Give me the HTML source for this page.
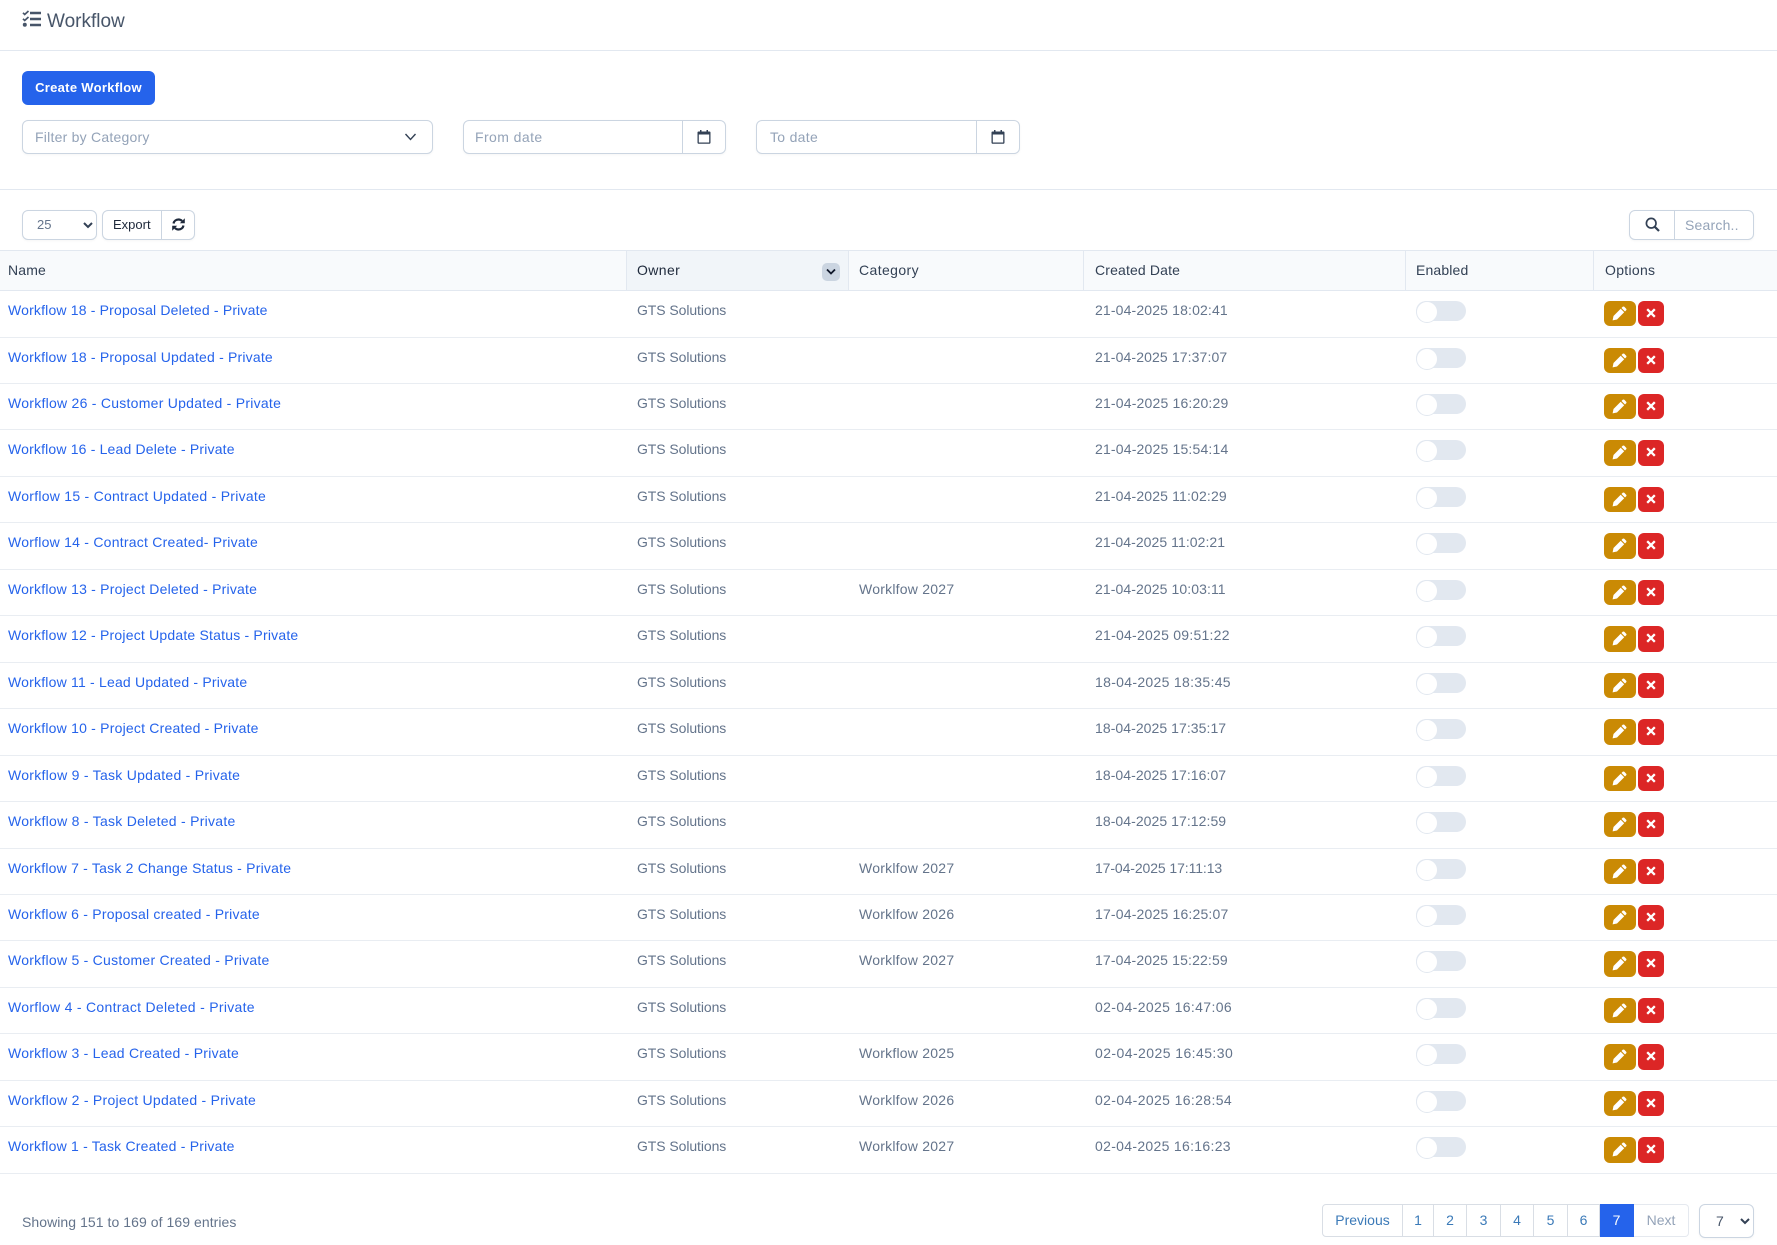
<!DOCTYPE html>
<html><head><meta charset="utf-8"><title>Workflow</title>
<style>
*{box-sizing:border-box}
html,body{margin:0;padding:0;background:#fff}
body{width:1777px;height:1245px;position:relative;overflow:hidden;font-family:"Liberation Sans",sans-serif;font-size:14px;color:#64748b}
.a{position:absolute;white-space:nowrap}
.box{position:absolute;border:1px solid #cbd5e1;border-radius:6px;background:#fff;box-shadow:0 1px 2px rgba(0,0,0,.04)}
.ph{color:#94a3b8;letter-spacing:.3px;line-height:20px}
.th{position:absolute;top:260px;line-height:20px;color:#334155;letter-spacing:.15px;white-space:nowrap}
.vl{position:absolute;top:250px;height:40px;width:1px;background:#e2e8f0}
#rows{position:absolute;left:0;top:291.1px;width:1777px}
.r{position:relative;height:46.46px;border-bottom:1px solid #e9edf2}
.r>*{position:absolute;white-space:nowrap}
.n,.o,.c,.d{top:9px;line-height:20px}
.n{left:8px;color:#2563eb;text-decoration:none}
.o{left:637px;letter-spacing:-.08px}
.c{left:859px;letter-spacing:.23px}
.d{left:1095px}
.t{left:1416px;top:10px;width:50px;height:20px;border-radius:10px;background:#e2e8f0}
.t:before{content:"";position:absolute;left:0;top:0;width:20px;height:20px;border-radius:50%;background:#fff;border:1px solid #e2e8f0}
.e{left:1604px;top:10px;width:32px;height:25.4px;border-radius:6px;background:#ca8a04}
.x{left:1638px;top:10px;width:26px;height:25.4px;border-radius:6px;background:#dc2626}
.e svg{position:absolute;left:8px;top:5px}
.x svg{position:absolute;left:8px;top:7px}
.p{position:absolute;top:1204px;height:33px;line-height:31px;text-align:center;color:#3b7ab8;border:1px solid #d9dee5;border-left:0;background:#fff}
</style></head>
<body>
<svg width="0" height="0" style="position:absolute"><defs>
<symbol id="pen" viewBox="0 0 15 15"><path fill="#fff" d="M10.700.8Q11.500.1 12.300.8L14.200 2.700Q14.900 3.500 14.200 4.300L13 5.500 9.500 2zM8.700 2.800 12.200 6.300 5 13.500.6 14.400 1.500 10z"/></symbol>
<symbol id="xx" viewBox="0 0 10 10"><path d="M1.200 1.200 8.800 8.800M8.800 1.200 1.200 8.800" stroke="#fff" stroke-width="2.300"/></symbol>
<symbol id="cal" viewBox="0 0 14 14"><path fill="#334155" d="M3 0h1.500v1.500h5V0H11v1.500h1.500c.6 0 1 .4 1 1v10c0 .8-.5 1.300-1.300 1.300H1.800C1 13.800.5 13.300.5 12.500v-10c0-.6.4-1 1-1H3zM1.800 4.500v8h10.400v-8z"/></symbol>
</defs></svg>

<!-- header -->
<svg class="a" style="left:22px;top:10px" width="20" height="17" viewBox="0 0 20 17"><g fill="none" stroke="#475569"><path stroke-width="1.700" d="M1 2.800 2.700 4.500 6.500 1M1 8.800 2.700 10.500 6.500 7"/><path stroke-width="2.400" d="M8 3h11M8 9h11M8 15h11"/></g><circle cx="2.800" cy="14.800" r="2" fill="#475569"/></svg>
<div class="a" style="left:47px;top:10px;font-size:19px;line-height:24px;color:#475569">Workflow</div>
<div class="a" style="left:0;top:50px;width:1777px;height:1px;background:#e2e8f0"></div>

<!-- create -->
<div class="a" style="left:22px;top:71px;width:133px;height:34px;background:#2563eb;border-radius:6px;color:#fff;font-weight:bold;font-size:13px;letter-spacing:.3px;line-height:34px;text-align:center">Create Workflow</div>

<!-- filters -->
<div class="box" style="left:22px;top:120px;width:411px;height:34px"></div>
<div class="a ph" style="left:35px;top:127px;letter-spacing:.23px">Filter by Category</div>
<svg class="a" style="left:404px;top:133px" width="13" height="8" viewBox="0 0 13 8"><path d="M1.500 1 6.500 6.500 11.500 1" fill="none" stroke="#334155" stroke-width="1.400"/></svg>

<div class="box" style="left:463px;top:120px;width:263px;height:34px"></div>
<div class="a" style="left:682px;top:120px;width:1px;height:34px;background:#cbd5e1"></div>
<div class="a ph" style="left:475px;top:127px;letter-spacing:.42px">From date</div>
<svg class="a" style="left:697px;top:130px" width="14" height="14"><use href="#cal"/></svg>

<div class="box" style="left:756px;top:120px;width:264px;height:34px"></div>
<div class="a" style="left:976px;top:120px;width:1px;height:34px;background:#cbd5e1"></div>
<div class="a ph" style="left:770px;top:127px">To date</div>
<svg class="a" style="left:991px;top:130px" width="14" height="14"><use href="#cal"/></svg>

<div class="a" style="left:0;top:189px;width:1777px;height:1px;background:#e2e8f0"></div>

<!-- toolbar -->
<div class="box" style="left:22px;top:210px;width:75px;height:30px"></div>
<div class="a" style="left:37px;top:215px;font-size:13px;line-height:20px;color:#64748b">25</div>
<svg class="a" style="left:83px;top:222px" width="10" height="7" viewBox="0 0 10 7"><path d="M1 1 5 5 9 1" fill="none" stroke="#334155" stroke-width="2"/></svg>
<div class="box" style="left:102px;top:210px;width:93px;height:30px"></div>
<div class="a" style="left:161px;top:210px;width:1px;height:30px;background:#cbd5e1"></div>
<div class="a" style="left:113px;top:215px;font-size:13px;line-height:20px;color:#1e293b">Export</div>
<svg class="a" style="left:172px;top:218px" width="13" height="13" viewBox="0 0 13 13"><g fill="none" stroke="#1e293b" stroke-width="2.200"><path d="M1.500 5.500C2 3 4 1.500 6.500 1.500c1.500 0 2.700.6 3.600 1.500"/><path d="M11.500 7.500C11 10 9 11.500 6.500 11.500c-1.500 0-2.700-.6-3.600-1.500"/></g><path fill="#1e293b" d="M12.800.2v5H7.800zM.2 12.800v-5H5.200z"/></svg>

<div class="box" style="left:1629px;top:210px;width:125px;height:30px"></div>
<div class="a" style="left:1674px;top:210px;width:1px;height:30px;background:#cbd5e1"></div>
<svg class="a" style="left:1645px;top:217px" width="15" height="15" viewBox="0 0 15 15"><circle cx="6.200" cy="6.200" r="4.800" fill="none" stroke="#334155" stroke-width="1.700"/><path d="M9.800 9.800 14 14" stroke="#334155" stroke-width="2.200"/></svg>
<div class="a ph" style="left:1685px;top:215px;letter-spacing:.2px">Search..</div>

<!-- table head -->
<div class="a" style="left:0;top:250px;width:1777px;height:41px;background:#f8fafc;border-top:1px solid #e2e8f0;border-bottom:1px solid #e2e8f0"></div>
<div class="a" style="left:626px;top:250px;width:223px;height:41px;background:#f1f5f9;border-top:1px solid #e2e8f0;border-bottom:1px solid #e2e8f0"></div>
<div class="vl" style="left:626px"></div><div class="vl" style="left:848px"></div><div class="vl" style="left:1083px"></div><div class="vl" style="left:1405px"></div><div class="vl" style="left:1593px"></div>
<div class="th" style="left:8px">Name</div>
<div class="th" style="left:637px;color:#1e293b;letter-spacing:.4px">Owner</div>
<div class="a" style="left:822px;top:263px;width:18px;height:18px;border-radius:5px;background:#cbd5e1"></div>
<svg class="a" style="left:826px;top:268px" width="10" height="8" viewBox="0 0 10 8"><path d="M1 1.500 5 5.500 9 1.500" fill="none" stroke="#0f172a" stroke-width="1.800"/></svg>
<div class="th" style="left:859px;letter-spacing:.4px">Category</div>
<div class="th" style="left:1095px">Created Date</div>
<div class="th" style="left:1416px">Enabled</div>
<div class="th" style="left:1605px;letter-spacing:.3px">Options</div>

<div id="rows">
<div class="r"><a class="n" style="letter-spacing:.175px">Workflow 18 - Proposal Deleted - Private</a><span class="o">GTS Solutions</span><span class="d" style="letter-spacing:.15px">21-04-2025 18:02:41</span><i class="t"></i><b class="e"><svg width="15" height="15"><use href="#pen"/></svg></b><b class="x"><svg width="10" height="10"><use href="#xx"/></svg></b></div>
<div class="r"><a class="n" style="letter-spacing:.19px">Workflow 18 - Proposal Updated - Private</a><span class="o">GTS Solutions</span><span class="d" style="letter-spacing:.12px">21-04-2025 17:37:07</span><i class="t"></i><b class="e"><svg width="15" height="15"><use href="#pen"/></svg></b><b class="x"><svg width="10" height="10"><use href="#xx"/></svg></b></div>
<div class="r"><a class="n" style="letter-spacing:.26px">Workflow 26 - Customer Updated - Private</a><span class="o">GTS Solutions</span><span class="d" style="letter-spacing:.18px">21-04-2025 16:20:29</span><i class="t"></i><b class="e"><svg width="15" height="15"><use href="#pen"/></svg></b><b class="x"><svg width="10" height="10"><use href="#xx"/></svg></b></div>
<div class="r"><a class="n" style="letter-spacing:.17px">Workflow 16 - Lead Delete - Private</a><span class="o">GTS Solutions</span><span class="d" style="letter-spacing:.18px">21-04-2025 15:54:14</span><i class="t"></i><b class="e"><svg width="15" height="15"><use href="#pen"/></svg></b><b class="x"><svg width="10" height="10"><use href="#xx"/></svg></b></div>
<div class="r"><a class="n" style="letter-spacing:.26px">Worflow 15 - Contract Updated - Private</a><span class="o">GTS Solutions</span><span class="d" style="letter-spacing:.15px">21-04-2025 11:02:29</span><i class="t"></i><b class="e"><svg width="15" height="15"><use href="#pen"/></svg></b><b class="x"><svg width="10" height="10"><use href="#xx"/></svg></b></div>
<div class="r"><a class="n" style="letter-spacing:.24px">Worflow 14 - Contract Created- Private</a><span class="o">GTS Solutions</span><span class="d" style="letter-spacing:.06px">21-04-2025 11:02:21</span><i class="t"></i><b class="e"><svg width="15" height="15"><use href="#pen"/></svg></b><b class="x"><svg width="10" height="10"><use href="#xx"/></svg></b></div>
<div class="r"><a class="n" style="letter-spacing:.21px">Workflow 13 - Project Deleted - Private</a><span class="o">GTS Solutions</span><span class="c">Worklfow 2027</span><span class="d" style="letter-spacing:.09px">21-04-2025 10:03:11</span><i class="t"></i><b class="e"><svg width="15" height="15"><use href="#pen"/></svg></b><b class="x"><svg width="10" height="10"><use href="#xx"/></svg></b></div>
<div class="r"><a class="n" style="letter-spacing:.2px">Workflow 12 - Project Update Status - Private</a><span class="o">GTS Solutions</span><span class="d" style="letter-spacing:.25px">21-04-2025 09:51:22</span><i class="t"></i><b class="e"><svg width="15" height="15"><use href="#pen"/></svg></b><b class="x"><svg width="10" height="10"><use href="#xx"/></svg></b></div>
<div class="r"><a class="n" style="letter-spacing:.2px">Workflow 11 - Lead Updated - Private</a><span class="o">GTS Solutions</span><span class="d" style="letter-spacing:.31px">18-04-2025 18:35:45</span><i class="t"></i><b class="e"><svg width="15" height="15"><use href="#pen"/></svg></b><b class="x"><svg width="10" height="10"><use href="#xx"/></svg></b></div>
<div class="r"><a class="n" style="letter-spacing:.21px">Workflow 10 - Project Created - Private</a><span class="o">GTS Solutions</span><span class="d" style="letter-spacing:.06px">18-04-2025 17:35:17</span><i class="t"></i><b class="e"><svg width="15" height="15"><use href="#pen"/></svg></b><b class="x"><svg width="10" height="10"><use href="#xx"/></svg></b></div>
<div class="r"><a class="n" style="letter-spacing:.27px">Workflow 9 - Task Updated - Private</a><span class="o">GTS Solutions</span><span class="d" style="letter-spacing:.06px">18-04-2025 17:16:07</span><i class="t"></i><b class="e"><svg width="15" height="15"><use href="#pen"/></svg></b><b class="x"><svg width="10" height="10"><use href="#xx"/></svg></b></div>
<div class="r"><a class="n" style="letter-spacing:.27px">Workflow 8 - Task Deleted - Private</a><span class="o">GTS Solutions</span><span class="d" style="letter-spacing:.06px">18-04-2025 17:12:59</span><i class="t"></i><b class="e"><svg width="15" height="15"><use href="#pen"/></svg></b><b class="x"><svg width="10" height="10"><use href="#xx"/></svg></b></div>
<div class="r"><a class="n" style="letter-spacing:.21px">Workflow 7 - Task 2 Change Status - Private</a><span class="o">GTS Solutions</span><span class="c">Worklfow 2027</span><span class="d" style="letter-spacing:-.1px">17-04-2025 17:11:13</span><i class="t"></i><b class="e"><svg width="15" height="15"><use href="#pen"/></svg></b><b class="x"><svg width="10" height="10"><use href="#xx"/></svg></b></div>
<div class="r"><a class="n" style="letter-spacing:.22px">Workflow 6 - Proposal created - Private</a><span class="o">GTS Solutions</span><span class="c">Worklfow 2026</span><span class="d" style="letter-spacing:.18px">17-04-2025 16:25:07</span><i class="t"></i><b class="e"><svg width="15" height="15"><use href="#pen"/></svg></b><b class="x"><svg width="10" height="10"><use href="#xx"/></svg></b></div>
<div class="r"><a class="n" style="letter-spacing:.25px">Workflow 5 - Customer Created - Private</a><span class="o">GTS Solutions</span><span class="c">Worklfow 2027</span><span class="d" style="letter-spacing:.15px">17-04-2025 15:22:59</span><i class="t"></i><b class="e"><svg width="15" height="15"><use href="#pen"/></svg></b><b class="x"><svg width="10" height="10"><use href="#xx"/></svg></b></div>
<div class="r"><a class="n" style="letter-spacing:.3px">Worflow 4 - Contract Deleted - Private</a><span class="o">GTS Solutions</span><span class="d" style="letter-spacing:.37px">02-04-2025 16:47:06</span><i class="t"></i><b class="e"><svg width="15" height="15"><use href="#pen"/></svg></b><b class="x"><svg width="10" height="10"><use href="#xx"/></svg></b></div>
<div class="r"><a class="n" style="letter-spacing:.25px">Workflow 3 - Lead Created - Private</a><span class="o">GTS Solutions</span><span class="c">Workflow 2025</span><span class="d" style="letter-spacing:.43px">02-04-2025 16:45:30</span><i class="t"></i><b class="e"><svg width="15" height="15"><use href="#pen"/></svg></b><b class="x"><svg width="10" height="10"><use href="#xx"/></svg></b></div>
<div class="r"><a class="n" style="letter-spacing:.27px">Workflow 2 - Project Updated - Private</a><span class="o">GTS Solutions</span><span class="c">Worklfow 2026</span><span class="d" style="letter-spacing:.37px">02-04-2025 16:28:54</span><i class="t"></i><b class="e"><svg width="15" height="15"><use href="#pen"/></svg></b><b class="x"><svg width="10" height="10"><use href="#xx"/></svg></b></div>
<div class="r"><a class="n" style="letter-spacing:.2px">Workflow 1 - Task Created - Private</a><span class="o">GTS Solutions</span><span class="c">Worklfow 2027</span><span class="d" style="letter-spacing:.31px">02-04-2025 16:16:23</span><i class="t"></i><b class="e"><svg width="15" height="15"><use href="#pen"/></svg></b><b class="x"><svg width="10" height="10"><use href="#xx"/></svg></b></div>
</div>

<!-- footer -->
<div class="a" style="left:22px;top:1212px;line-height:20px;letter-spacing:.06px">Showing 151 to 169 of 169 entries</div>
<div class="p" style="left:1322px;width:81px;border-left:1px solid #d9dee5;border-radius:4px 0 0 4px">Previous</div>
<div class="p" style="left:1403px;width:31px">1</div>
<div class="p" style="left:1434px;width:33px">2</div>
<div class="p" style="left:1467px;width:34px">3</div>
<div class="p" style="left:1501px;width:33px">4</div>
<div class="p" style="left:1534px;width:34px">5</div>
<div class="p" style="left:1568px;width:32px">6</div>
<div class="p" style="left:1600px;width:34px;background:#2563eb;border-color:#2563eb;color:#fff">7</div>
<div class="p" style="left:1634px;width:55px;color:#94a3b8;border-color:#e5e9ef;border-radius:0 4px 4px 0">Next</div>
<div class="box" style="left:1699px;top:1204px;width:55px;height:34px"></div>
<div class="a" style="left:1716px;top:1211px;line-height:20px;color:#475569">7</div>
<svg class="a" style="left:1740px;top:1218px" width="10" height="7" viewBox="0 0 10 7"><path d="M1 1 5 5 9 1" fill="none" stroke="#334155" stroke-width="2"/></svg>
</body></html>
